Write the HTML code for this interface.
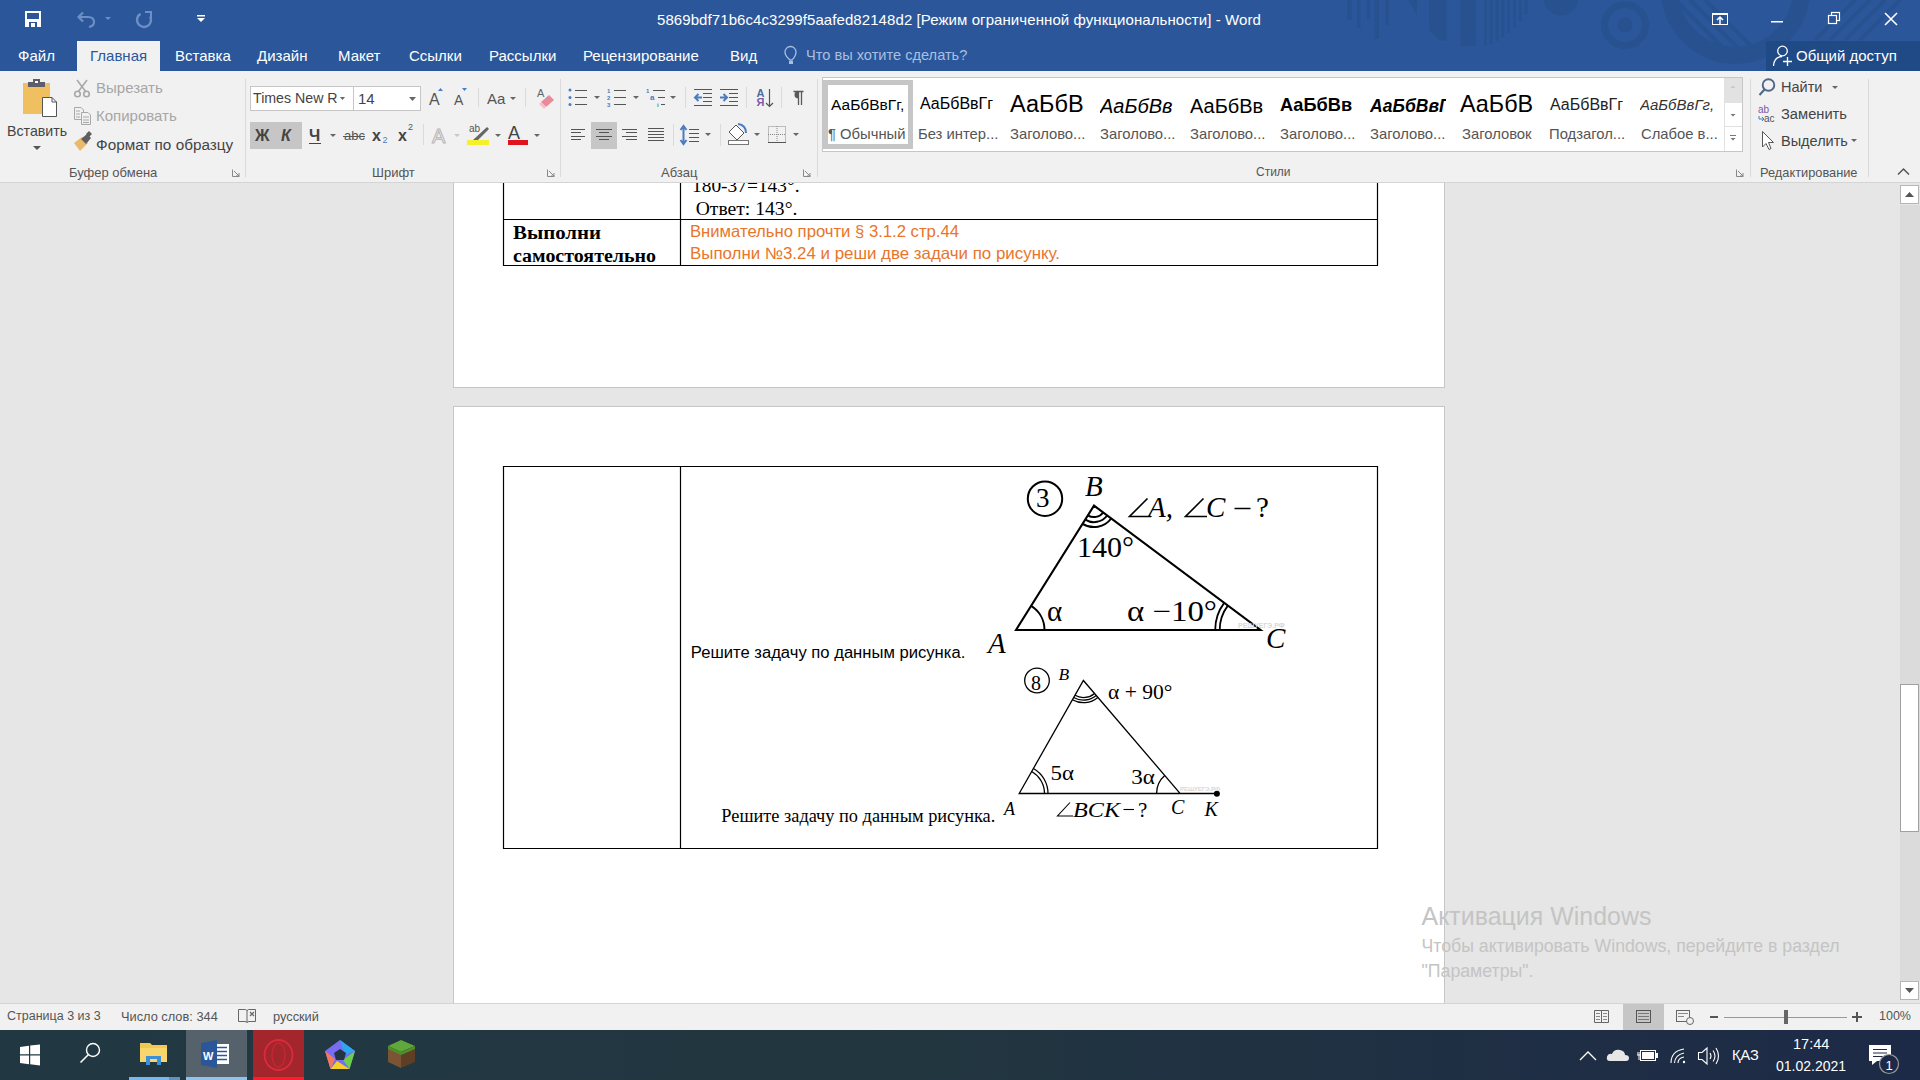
<!DOCTYPE html>
<html><head><meta charset="utf-8">
<style>
*{margin:0;padding:0;box-sizing:border-box}
html,body{width:1920px;height:1080px;overflow:hidden;background:#e6e6e6;font-family:"Liberation Sans",sans-serif}
.a{position:absolute;white-space:nowrap}
#title{position:absolute;left:0;top:0;width:1920px;height:71px;background:#2b579a;overflow:hidden}
#ribbon{position:absolute;left:0;top:71px;width:1920px;height:112px;background:#f1f1f1;border-bottom:1px solid #d4d4d4}
#doc{position:absolute;left:0;top:183px;width:1920px;height:820px;background:#e6e6e6;overflow:hidden}
#status{position:absolute;left:0;top:1003px;width:1920px;height:27px;background:#f1f1f1;border-top:1px solid #d4d4d4}
#task{position:absolute;left:0;top:1030px;width:1920px;height:50px;background:linear-gradient(to right,#213843 0%,#22363f 45%,#1d2a47 100%)}
.tab{position:absolute;top:47px;font-size:15px;color:#fff}
.page{position:absolute;left:453px;width:992px;background:#fff;border:1px solid #c6c6c6}
.tnr{font-family:"Liberation Serif",serif}
.ui{font-size:15px;color:#444}
.grp{position:absolute;top:94px;font-size:13px;color:#555}
.sep{position:absolute;top:8px;width:1px;height:98px;background:#dadada}
</style></head><body>
<div id="title">
  <svg class="a" style="left:0;top:0" width="1920" height="71" viewBox="0 0 1920 71">
    <defs><clipPath id="bc"><circle cx="1735.5" cy="-10.8" r="66"/></clipPath></defs>
    <g fill="#27518f">
      <rect x="1347" y="0" width="5" height="20"/><rect x="1357" y="0" width="3.5" height="28"/><rect x="1367" y="0" width="3" height="19"/><rect x="1374.5" y="0" width="4.5" height="39"/><rect x="1385" y="0" width="4" height="25"/>
      <path d="M1408 0 H1417 V15 Z"/>
      <path d="M1429 0 H1446.5 V41 H1440 L1429 30 Z"/>
      <rect x="1460.5" y="0" width="15.5" height="46"/>
      <rect x="1484.0" y="0" width="2.8" height="46"/><rect x="1489.8" y="0" width="2.8" height="44"/><rect x="1495.6" y="0" width="2.8" height="41"/><rect x="1501.4" y="0" width="2.8" height="37"/><rect x="1507.2" y="0" width="2.8" height="33"/><rect x="1513.0" y="0" width="2.8" height="28"/><rect x="1518.8" y="0" width="2.8" height="22"/><rect x="1524.6" y="0" width="2.8" height="15"/>
      <circle cx="1561" cy="-2" r="17.5"/>
      <circle cx="1625" cy="25" r="7.5"/>
    </g>
    <circle cx="1625" cy="25" r="20.5" fill="none" stroke="#27518f" stroke-width="7"/>
    <circle cx="1735.5" cy="-10.8" r="66" fill="none" stroke="#27518f" stroke-width="17"/>
    <g clip-path="url(#bc)" stroke="#27518f" stroke-width="4">
      <line x1="1660" y1="0" x2="1730" y2="70"/><line x1="1675" y1="0" x2="1745" y2="70"/><line x1="1690" y1="0" x2="1760" y2="70"/><line x1="1705" y1="0" x2="1775" y2="70"/>
    </g>
    <g stroke="#27518f" stroke-width="4">
      <line x1="1815" y1="40" x2="1855" y2="0"/><line x1="1830" y1="40" x2="1870" y2="0"/><line x1="1845" y1="40" x2="1885" y2="0"/><line x1="1860" y1="40" x2="1900" y2="0"/>
    </g>
    <!-- save -->
    <path d="M25 11 H41 V27 H25 Z" fill="#fff"/>
    <rect x="27" y="13" width="12" height="6" fill="#2b579a"/>
    <rect x="29" y="22" width="8" height="5" fill="#2b579a"/>
    <rect x="31" y="23" width="4" height="4" fill="#fff"/>
    <!-- undo -->
    <path d="M79 17 H88 Q94 17 94 22 Q94 26 89 27" fill="none" stroke="#6e8fc3" stroke-width="2.2"/>
    <path d="M83 12.5 L78.5 17 L83 21.5" fill="none" stroke="#6e8fc3" stroke-width="2.2"/>
    <path d="M105 17 L111 17 L108 20 Z" fill="#6e8fc3"/>
    <!-- redo -->
    <path d="M140.5 13.9 A7 7 0 1 0 150.1 16.5" fill="none" stroke="#6e8fc3" stroke-width="2.4"/>
    <path d="M145 12 H151 V18" fill="none" stroke="#6e8fc3" stroke-width="2"/>
    <!-- customize -->
    <rect x="197" y="15" width="8" height="1.5" fill="#fff"/>
    <path d="M197 18 L205 18 L201 22 Z" fill="#fff"/>
    <!-- window controls -->
    <rect x="1712.5" y="13.5" width="15" height="11" fill="none" stroke="#fff"/>
    <rect x="1712" y="13" width="16" height="2" fill="#fff"/>
    <path d="M1720 24 V17 M1717 20 L1720 17 L1723 20" fill="none" stroke="#fff" stroke-width="1.5"/>
    <rect x="1771" y="21" width="12" height="1.5" fill="#fff"/>
    <rect x="1831.5" y="12.5" width="8" height="8" fill="none" stroke="#fff" stroke-width="1.2"/>
    <rect x="1828.5" y="15.5" width="8" height="8" fill="#2b579a" stroke="#fff" stroke-width="1.2"/>
    <path d="M1885 13 L1897 25 M1897 13 L1885 25" stroke="#fff" stroke-width="1.6"/>
    <!-- share -->
    <rect x="1766" y="41" width="154" height="30" fill="#1f4a86"/>
    <circle cx="1782.5" cy="51" r="4.8" fill="none" stroke="#fff" stroke-width="1.3"/>
    <path d="M1773.5 66 Q1774 57 1782 56.5" fill="none" stroke="#fff" stroke-width="1.3"/>
    <path d="M1787.5 57 V66 M1783 61.5 H1792" stroke="#fff" stroke-width="1.3"/>
    <!-- lightbulb -->
    <path d="M790 60 Q785 56 785 52 A5.5 5.5 0 0 1 796 52 Q796 56 792 60 Z" fill="none" stroke="#a9bfe0" stroke-width="1.3"/>
    <rect x="789" y="61" width="4" height="3" fill="#a9bfe0"/>
  </svg>
  <div class="a" style="left:657px;top:11px;font-size:15px;color:#fff;letter-spacing:0.08px">5869bdf71b6c4c3299f5aafed82148d2 [Режим ограниченной функциональности] - Word</div>
  <div class="a tab" style="left:18px">Файл</div>
  <div style="position:absolute;left:77px;top:41px;width:83px;height:30px;background:#f1f1f1"></div>
  <div class="a tab" style="left:90px;color:#2b579a">Главная</div>
  <div class="a tab" style="left:175px">Вставка</div>
  <div class="a tab" style="left:257px">Дизайн</div>
  <div class="a tab" style="left:338px">Макет</div>
  <div class="a tab" style="left:409px">Ссылки</div>
  <div class="a tab" style="left:489px">Рассылки</div>
  <div class="a tab" style="left:583px">Рецензирование</div>
  <div class="a tab" style="left:730px">Вид</div>
  <div class="a tab" style="left:806px;color:#a9bfe0;font-size:14.6px">Что вы хотите сделать?</div>
  <div class="a tab" style="left:1796px">Общий доступ</div>
</div>
<div id="ribbon">
  <!-- clipboard -->
  <svg class="a" style="left:0;top:0" width="250" height="112" viewBox="0 71 250 112">
    <rect x="23" y="83" width="27" height="31" fill="#f0c060"/>
    <rect x="28" y="82" width="17" height="5" fill="#5d5d6b"/>
    <rect x="33" y="79" width="7" height="5" fill="#5d5d6b"/>
    <rect x="35" y="81" width="3" height="2" fill="#fff"/>
    <path d="M42.5 97.5 H52 L56.5 102 V116.5 H42.5 Z" fill="#fff" stroke="#555" stroke-width="1"/>
    <path d="M52 97.5 V102 H56.5" fill="none" stroke="#555" stroke-width="1"/>
    <path d="M33 146 L41 146 L37 150 Z" fill="#555"/>
    <!-- scissors -->
    <g stroke="#a8a8a8" stroke-width="1.6" fill="none">
      <line x1="77" y1="80" x2="86" y2="92"/><line x1="87" y1="80" x2="78" y2="92"/>
      <circle cx="77.5" cy="94" r="2.8"/><circle cx="86.5" cy="94" r="2.8"/>
    </g>
    <!-- copy -->
    <g stroke="#a8a8a8" stroke-width="1" fill="#f1f1f1">
      <path d="M74.5 107.5 H81 L83.5 110 V119.5 H74.5 Z"/>
      <path d="M81.5 112.5 H88 L90.5 115 V124.5 H81.5 Z"/>
      <line x1="76" y1="111" x2="80" y2="111"/><line x1="76" y1="114" x2="80" y2="114"/><line x1="76" y1="117" x2="80" y2="117"/>
      <line x1="83" y1="117" x2="89" y2="117"/><line x1="83" y1="120" x2="89" y2="120"/><line x1="83" y1="122.5" x2="89" y2="122.5"/>
    </g>
    <!-- brush -->
    <path d="M74 143 L82 137 L88 143 L80 151 Z" fill="#e9b96e"/>
    <path d="M81 139 L87 134 L91 138 L86 144 Z" fill="#5e5e5e"/>
    <path d="M86 134 L89 131 L92 134 L89 137 Z" fill="#5e5e5e"/>
    <path d="M232.5 169.5 V176.5 H239.5" fill="none" stroke="#888" stroke-width="1"/>
    <path d="M234 171 L239 176 M239 173 V176 H236" fill="none" stroke="#888" stroke-width="1"/>
  </svg>
  <div class="a ui" style="left:7px;top:52px;color:#444;font-size:14.2px">Вставить</div>
  <div class="a ui" style="left:96px;top:8px;color:#a6a6a6">Вырезать</div>
  <div class="a ui" style="left:96px;top:36px;color:#a6a6a6">Копировать</div>
  <div class="a ui" style="left:96px;top:65px;color:#444;font-size:15.3px">Формат по образцу</div>
  <div class="a grp" style="left:69px">Буфер обмена</div>
  <div class="sep" style="left:245px"></div>
  <!-- font group -->
  <div class="a" style="left:250px;top:15px;width:104px;height:25px;background:#fff;border:1px solid #c6c6c6"></div>
  <div class="a" style="left:353px;top:15px;width:68px;height:25px;background:#fff;border:1px solid #c6c6c6"></div>
  <div class="a ui" style="left:253px;top:19px;color:#444;font-size:14.2px;width:86px;overflow:hidden">Times New R</div>
  <div class="a ui" style="left:358px;top:19px;color:#444">14</div>
  <div class="a" style="left:250px;top:51px;width:52px;height:27px;background:#c6c6c6"></div>
  <svg class="a" style="left:245px;top:0" width="320" height="112" viewBox="245 71 320 112">
    <g fill="#666">
      <path d="M340 97 L345 97 L342.5 100 Z"/><path d="M409 97 L416 97 L412.5 101 Z"/>
      <path d="M510 97 L516 97 L513 100 Z"/>
    </g>
    <text x="429" y="105" font-family="Liberation Sans" font-size="16" fill="#555">A</text>
    <path d="M438 91 L443 91 L440.5 88 Z" fill="#4a7cc0"/>
    <text x="454" y="105" font-family="Liberation Sans" font-size="14" fill="#555">A</text>
    <path d="M462 88 L467 88 L464.5 91 Z" fill="#4a7cc0"/>
    <line x1="478.5" y1="88" x2="478.5" y2="107" stroke="#dadada"/>
    <text x="487" y="104" font-family="Liberation Sans" font-size="15" fill="#555">Aa</text>
    <line x1="525.5" y1="88" x2="525.5" y2="107" stroke="#dadada"/>
    <text x="537" y="97" font-family="Liberation Sans" font-size="11" fill="#666">A</text>
    <path d="M541 102 L549 95 L554 100 L546 107 Z" fill="#e98a9a"/>
    <path d="M541 102 L546 107 L544 109 L539 104 Z" fill="#f5c0c8"/>
    <!-- row 2 -->
    <text x="255" y="141" font-family="Liberation Sans" font-size="16" font-weight="700" fill="#444">Ж</text>
    <text x="281" y="141" font-family="Liberation Sans" font-size="16" font-weight="700" font-style="italic" fill="#444">К</text>
    <text x="309" y="141" font-family="Liberation Sans" font-size="16" font-weight="700" fill="#444">Ч</text>
    <line x1="309" y1="143.5" x2="321" y2="143.5" stroke="#444"/>
    <path d="M330 134 L336 134 L333 137 Z" fill="#666"/>
    <text x="344" y="140" font-family="Liberation Sans" font-size="13" fill="#555">abc</text>
    <line x1="343" y1="136.5" x2="365" y2="136.5" stroke="#555"/>
    <text x="372" y="141" font-family="Liberation Sans" font-size="16" font-weight="700" fill="#444">x</text>
    <text x="382.5" y="143" font-family="Liberation Sans" font-size="9" fill="#4a7cc0">2</text>
    <text x="398" y="141" font-family="Liberation Sans" font-size="16" font-weight="700" fill="#444">x</text>
    <text x="408" y="130" font-family="Liberation Sans" font-size="9" fill="#555">2</text>
    <line x1="423.5" y1="124" x2="423.5" y2="145" stroke="#dadada"/>
    <text x="432" y="143" font-family="Liberation Sans" font-size="20" fill="#f1f1f1" stroke="#b8b8b8" stroke-width="1">A</text>
    <path d="M454 134 L460 134 L457 137 Z" fill="#c8c8c8"/>
    <text x="469" y="132" font-family="Liberation Sans" font-size="10" fill="#555">ab</text>
    <path d="M473 140 L487 127 L489 129 L476 142 Z" fill="#666"/>
    <rect x="467" y="140" width="22" height="5" fill="#f5f02a"/>
    <path d="M495 134 L501 134 L498 137 Z" fill="#666"/>
    <text x="508" y="139" font-family="Liberation Sans" font-size="18" fill="#444">A</text>
    <rect x="508" y="140" width="20" height="5" fill="#e0141e"/>
    <path d="M534 134 L540 134 L537 137 Z" fill="#666"/>
    <path d="M547.5 169.5 V176.5 H554.5" fill="none" stroke="#888"/>
    <path d="M549 171 L554 176 M554 173 V176 H551" fill="none" stroke="#888"/>
  </svg>
  <div class="a grp" style="left:372px">Шрифт</div>
  <div class="sep" style="left:560px"></div>
  <!-- paragraph group -->
  <div class="a" style="left:591px;top:51px;width:26px;height:27px;background:#c6c6c6"></div>
  <svg class="a" style="left:560px;top:0" width="260" height="112" viewBox="560 71 260 112">
    <g fill="#4a7cc0">
      <circle cx="570" cy="90" r="1.5"/><circle cx="570" cy="97.5" r="1.5"/><circle cx="570" cy="104.5" r="1.5"/>
    </g>
    <g stroke="#555" stroke-width="1">
      <line x1="575" y1="90.5" x2="587" y2="90.5"/><line x1="575" y1="97.5" x2="587" y2="97.5"/><line x1="575" y1="104.5" x2="587" y2="104.5"/>
      <line x1="614" y1="90.5" x2="626" y2="90.5"/><line x1="614" y1="97.5" x2="626" y2="97.5"/><line x1="614" y1="104.5" x2="626" y2="104.5"/>
      <line x1="653" y1="90.5" x2="665" y2="90.5"/><line x1="658" y1="97.5" x2="665" y2="97.5"/><line x1="661" y1="104.5" x2="665" y2="104.5"/>
    </g>
    <g font-family="Liberation Sans" font-size="6" fill="#4a7cc0" font-weight="700">
      <text x="607" y="93">1</text><text x="607" y="100">2</text><text x="607" y="107">3</text>
      <text x="646" y="93">1</text><text x="650" y="100" font-size="8">a</text><text x="657" y="107">i</text>
    </g>
    <g fill="#666">
      <path d="M594 96 L600 96 L597 99 Z"/><path d="M633 96 L639 96 L636 99 Z"/><path d="M670 96 L676 96 L673 99 Z"/>
      <path d="M705 133 L711 133 L708 136 Z"/><path d="M754 133 L760 133 L757 136 Z"/><path d="M793 133 L799 133 L796 136 Z"/>
    </g>
    <g stroke="#dadada">
      <line x1="685.5" y1="87" x2="685.5" y2="108"/><line x1="746.5" y1="87" x2="746.5" y2="108"/><line x1="781.5" y1="87" x2="781.5" y2="108"/>
      <line x1="673.5" y1="124" x2="673.5" y2="146"/><line x1="720.5" y1="124" x2="720.5" y2="146"/>
    </g>
    <g stroke="#555" stroke-width="1">
      <line x1="694" y1="89.5" x2="712" y2="89.5"/><line x1="703" y1="93.5" x2="712" y2="93.5"/><line x1="703" y1="97.5" x2="712" y2="97.5"/><line x1="703" y1="101.5" x2="712" y2="101.5"/><line x1="694" y1="105.5" x2="712" y2="105.5"/>
      <line x1="720" y1="89.5" x2="738" y2="89.5"/><line x1="729" y1="93.5" x2="738" y2="93.5"/><line x1="729" y1="97.5" x2="738" y2="97.5"/><line x1="729" y1="101.5" x2="738" y2="101.5"/><line x1="720" y1="105.5" x2="738" y2="105.5"/>
    </g>
    <g stroke="#4a7cc0" stroke-width="2" fill="none">
      <path d="M702 97.5 H695 M698.5 94 L695 97.5 L698.5 101"/>
      <path d="M720 97.5 H727 M723.5 94 L727 97.5 L723.5 101"/>
    </g>
    <text x="756.5" y="96.8" font-family="Liberation Sans" font-size="11" font-weight="700" fill="#4a6fa0">A</text>
    <text x="756.5" y="106.3" font-family="Liberation Sans" font-size="11" font-weight="700" fill="#7a5aa8">Я</text>
    <path d="M769.5 89 V106.5 M766 103 L769.5 106.5 L773 103" fill="none" stroke="#555" stroke-width="1.2"/>
    <path d="M793.5 91.5 H803.5 M798.5 91.5 V105 M801.5 91.5 V105" fill="none" stroke="#5a5a5a" stroke-width="1.3"/><path d="M798.5 91 A4 3.8 0 0 0 798.5 98.6 Z" fill="#5a5a5a"/>
    <!-- row2 -->
    <g stroke="#555" stroke-width="1">
      <line x1="571" y1="129.5" x2="585" y2="129.5"/><line x1="571" y1="132.5" x2="581" y2="132.5"/><line x1="571" y1="136.5" x2="585" y2="136.5"/><line x1="571" y1="139.5" x2="581" y2="139.5"/>
      <line x1="596" y1="129.5" x2="612" y2="129.5"/><line x1="599" y1="132.5" x2="609" y2="132.5"/><line x1="596" y1="136.5" x2="612" y2="136.5"/><line x1="599" y1="139.5" x2="609" y2="139.5"/>
      <line x1="622" y1="129.5" x2="637" y2="129.5"/><line x1="626" y1="132.5" x2="637" y2="132.5"/><line x1="622" y1="136.5" x2="637" y2="136.5"/><line x1="626" y1="139.5" x2="637" y2="139.5"/>
      <line x1="648" y1="128.5" x2="664" y2="128.5"/><line x1="648" y1="131.5" x2="664" y2="131.5"/><line x1="648" y1="134.5" x2="664" y2="134.5"/><line x1="648" y1="137.5" x2="664" y2="137.5"/><line x1="648" y1="140.5" x2="664" y2="140.5"/>
      <line x1="689" y1="129.5" x2="699" y2="129.5"/><line x1="689" y1="133.5" x2="699" y2="133.5"/><line x1="689" y1="137.5" x2="699" y2="137.5"/><line x1="689" y1="141.5" x2="699" y2="141.5"/>
    </g>
    <path d="M683.5 127 V143 M680.5 130 L683.5 126 L686.5 130 M680.5 140 L683.5 144 L686.5 140" fill="none" stroke="#4a7cc0" stroke-width="2"/>
    <path d="M729 132 L736 125 L744 133 L737 140 Z" fill="#fff" stroke="#555"/>
    <path d="M738 124 Q746 125 746 133" fill="none" stroke="#4a7cc0" stroke-width="2"/>
    <rect x="728.5" y="140.5" width="20" height="4" fill="#fff" stroke="#777"/>
    <g stroke="#888" stroke-width="1" stroke-dasharray="1,1" fill="none">
      <rect x="768.5" y="126.5" width="17" height="16"/><line x1="777" y1="126" x2="777" y2="143"/><line x1="768" y1="134.5" x2="786" y2="134.5"/>
    </g>
    <line x1="768" y1="142.5" x2="786" y2="142.5" stroke="#555"/>
    <path d="M803.5 169.5 V176.5 H810.5" fill="none" stroke="#888"/>
    <path d="M805 171 L810 176 M810 173 V176 H807" fill="none" stroke="#888"/>
  </svg>
  <div class="a grp" style="left:661px">Абзац</div>
  <div class="sep" style="left:817px"></div>
  <!-- styles -->
  <div class="a" style="left:822px;top:6px;width:921px;height:75px;background:#fff;border:1px solid #c6c6c6"></div>
  <div class="a" style="left:823px;top:9px;width:90px;height:69px;border:5px solid #c6c6c6"></div>
  <div class="a" style="left:1724px;top:7px;width:18px;height:73px;border-left:1px solid #e1e1e1"></div>
  <div class="a" style="left:1725px;top:7px;width:17px;height:25px;background:#e2e2e2"></div>
  <div class="a" style="left:1725px;top:55px;width:17px;height:1px;background:#e1e1e1"></div>
  <svg class="a" style="left:1724px;top:0" width="20" height="112" viewBox="1724 71 20 112">
    <path d="M1730.5 88 L1735.5 88 L1733 85.5 Z" fill="#c8c8c8"/>
    <path d="M1730.5 114 L1735.5 114 L1733 116.5 Z" fill="#777"/>
    <path d="M1730 135.5 H1736" stroke="#777"/>
    <path d="M1730.5 138 L1735.5 138 L1733 140.5 Z" fill="#777"/>
    <path d="M1736.5 169.5 V176.5 H1743.5" fill="none" stroke="#888"/>
    <path d="M1738 171 L1743 176 M1743 173 V176 H1740" fill="none" stroke="#888"/>
  </svg>
  <div class="a" style="left:831px;top:25px;width:76px;overflow:hidden;font-size:15.5px;color:#000">АаБбВвГг,</div>
  <div class="a" style="left:920px;top:24px;font-size:16px;color:#000">АаБбВвГг</div>
  <div class="a" style="left:1010px;top:20px;font-size:23.5px;color:#000">АаБбВ</div>
  <div class="a" style="left:1100px;top:24px;font-size:20px;font-style:italic;color:#000;width:76px;overflow:hidden">АаБбВв</div>
  <div class="a" style="left:1190px;top:24px;font-size:20px;color:#000">АаБбВв</div>
  <div class="a" style="left:1280px;top:24px;font-size:18.2px;font-weight:700;color:#000">АаБбВв</div>
  <div class="a" style="left:1370px;top:25px;font-size:17.5px;font-weight:700;font-style:italic;color:#000;width:76px;overflow:hidden">АаБбВвГ</div>
  <div class="a" style="left:1460px;top:20px;font-size:23.4px;color:#000">АаБбВ</div>
  <div class="a" style="left:1550px;top:25px;font-size:16px;color:#222;width:76px;overflow:hidden">АаБбВвГг</div>
  <div class="a" style="left:1640px;top:25px;font-size:15px;font-style:italic;color:#333;width:76px;overflow:hidden">АаБбВвГг,</div>
  <div class="a" style="left:828px;top:55px;font-size:14.8px;color:#555">¶ Обычный</div>
  <div class="a" style="left:918px;top:55px;font-size:14.8px;color:#555">Без интер...</div>
  <div class="a" style="left:1010px;top:55px;font-size:14.8px;color:#555">Заголово...</div>
  <div class="a" style="left:1100px;top:55px;font-size:14.8px;color:#555">Заголово...</div>
  <div class="a" style="left:1190px;top:55px;font-size:14.8px;color:#555">Заголово...</div>
  <div class="a" style="left:1280px;top:55px;font-size:14.8px;color:#555">Заголово...</div>
  <div class="a" style="left:1370px;top:55px;font-size:14.8px;color:#555">Заголово...</div>
  <div class="a" style="left:1462px;top:55px;font-size:14.8px;color:#555">Заголовок</div>
  <div class="a" style="left:1549px;top:55px;font-size:14.8px;color:#555">Подзагол...</div>
  <div class="a" style="left:1641px;top:55px;font-size:14.8px;color:#555">Слабое в...</div>
  <div class="a grp" style="left:1256px;font-size:12px">Стили</div>
  <div class="sep" style="left:1750px"></div>
  <!-- editing -->
  <svg class="a" style="left:1750px;top:0" width="170" height="112" viewBox="1750 71 170 112">
    <circle cx="1768.5" cy="85" r="5.8" fill="none" stroke="#4f6686" stroke-width="1.9"/>
    <line x1="1764.5" y1="89.5" x2="1759.5" y2="95" stroke="#4f6686" stroke-width="2"/>
    <path d="M1832 86 L1838 86 L1835 89 Z" fill="#666"/>
    <text x="1758" y="113" font-family="Liberation Sans" font-size="10" fill="#7a5aa8">ab</text>
    <text x="1764" y="122" font-family="Liberation Sans" font-size="10" fill="#555">ac</text>
    <path d="M1759 116 V119 H1764 M1762 117 L1764 119 L1762 121" fill="none" stroke="#4a7cc0" stroke-width="1"/>
    <path d="M1762.5 131.5 L1762.5 147 L1766 143.5 L1769 149.5 L1771 148.5 L1768.5 142.5 L1773.5 142.5 Z" fill="#fff" stroke="#555" stroke-width="1"/>
    <path d="M1851 139 L1857 139 L1854 142 Z" fill="#666"/>
    <path d="M1898 174.5 L1903.5 169 L1909 174.5" fill="none" stroke="#555" stroke-width="1.5"/>
  </svg>
  <div class="a ui" style="left:1781px;top:8px;font-size:14.5px">Найти</div>
  <div class="a ui" style="left:1781px;top:35px;font-size:14.7px">Заменить</div>
  <div class="a ui" style="left:1781px;top:62px;font-size:14.5px">Выделить</div>
  <div class="a grp" style="left:1760px;font-size:12.8px">Редактирование</div>
  <div class="sep" style="left:1868px"></div>
</div>
<div id="doc">
<svg style="position:absolute;left:0;top:-183px" width="1920" height="1003" viewBox="0 0 1920 1003">
  <rect x="453.5" y="150.5" width="991" height="237" fill="#fff" stroke="#c6c6c6"/>
  <rect x="453.5" y="406.5" width="991" height="700" fill="#fff" stroke="#c6c6c6"/>
  <g stroke="#000" stroke-width="1.2" fill="none">
    <path d="M503.5 150 V265.5 M680.5 150 V265.5 M1377.5 150 V265.5 M503 219.5 H1378 M503 265.5 H1378"/>
    <path d="M503 466.5 H1378 M503 848.5 H1378 M503.5 466 V849 M680.5 466 V849 M1377.5 466 V849"/>
  </g>
  <g font-family="Liberation Serif" font-size="18.67" fill="#000">
    <text x="692" y="191.7" textLength="107.6" lengthAdjust="spacingAndGlyphs">180-37=143°.</text>
    <text x="695.7" y="214.6" textLength="101.7" lengthAdjust="spacingAndGlyphs">Ответ: 143°.</text>
    <text x="513" y="238.7" font-weight="700" textLength="88" lengthAdjust="spacingAndGlyphs">Выполни</text>
    <text x="513" y="261.7" font-weight="700" textLength="143" lengthAdjust="spacingAndGlyphs">самостоятельно</text>
    <text x="721.3" y="821.7" font-size="18.3" textLength="274" lengthAdjust="spacingAndGlyphs">Решите задачу по данным рисунка.</text>
  </g>
  <g font-family="Liberation Sans" fill="#e8752a" font-size="16.5">
    <text x="690" y="236.7" textLength="269" lengthAdjust="spacingAndGlyphs">Внимательно прочти § 3.1.2 стр.44</text>
    <text x="690" y="259" textLength="370" lengthAdjust="spacingAndGlyphs">Выполни №3.24 и реши две задачи по рисунку.</text>
  </g>
  <g stroke="#000" fill="none">
    <path d="M1016 630 L1094 505.6 L1260.5 630 Z" stroke-width="2.1" stroke-linejoin="miter"/>
    <path d="M1087.9 515.3 A11.5 11.5 0 0 0 1103.2 512.5" stroke-width="2"/>
    <path d="M1085.2 519.6 A16.5 16.5 0 0 0 1107.2 515.5" stroke-width="2"/>
    <path d="M1082.6 523.8 A21.5 21.5 0 0 0 1111.2 518.5" stroke-width="2"/>
    <path d="M1044.5 630.0 A28.5 28.5 0 0 0 1031.1 605.9" stroke-width="2"/>
    <path d="M1227.8 605.6 A40.8 40.8 0 0 0 1219.7 630.0" stroke-width="1.8"/>
    <path d="M1224.2 602.9 A45.3 45.3 0 0 0 1215.2 630.0" stroke-width="1.8"/>
    <circle cx="1045" cy="498.7" r="17.2" stroke-width="2"/>
  </g>
  <g font-family="Liberation Serif" fill="#000">
    <text x="1036" y="506.6" font-size="27">3</text>
    <text x="1085" y="495.5" font-size="29" font-style="italic">B</text>
    <text x="1077" y="556.5" font-size="30" textLength="57" lengthAdjust="spacingAndGlyphs">140°</text>
    <path d="M1147.5 498.5 L1129.5 516.5 H1151 M1203.5 498.5 L1185.5 516.5 H1207" fill="none" stroke="#000" stroke-width="1.6"/>
    <text x="1148" y="517.4" font-size="29" font-style="italic">A,</text>
    <text x="1206" y="517.4" font-size="29" font-style="italic">C</text>
    <path d="M1234.5 508.5 H1250.5" stroke="#000" stroke-width="1.5"/>
    <text x="1256" y="517.4" font-size="29">?</text>
    <text x="1047" y="621" font-size="29">α</text>
    <text x="1127" y="621" font-size="29" textLength="90" lengthAdjust="spacingAndGlyphs">α −10°</text>
    <text x="988" y="652.6" font-size="29" font-style="italic">A</text>
    <text x="1266" y="648" font-size="29" font-style="italic">C</text>
  </g>
  <text x="1238" y="628" font-family="Liberation Sans" font-size="7" fill="#d8d8d8" font-weight="700">РЕШУЕГЭ.РФ</text>
  <g stroke="#000" fill="none" stroke-width="1.3">
    <path d="M1019.2 793.5 L1083.4 680.5 L1180.2 793.5 Z M1180.2 793.5 H1216.9"/>
    <path d="M1075.0 695.3 A17 17 0 0 0 1094.5 693.4"/>
    <path d="M1073.7 697.5 A19.6 19.6 0 0 0 1096.2 695.4"/>
    <path d="M1072.4 699.8 A22.2 22.2 0 0 0 1097.8 697.4"/>
    <path d="M1044.5 793.5 A25.3 25.3 0 0 0 1031.7 771.5"/>
    <path d="M1048.0 793.5 A28.8 28.8 0 0 0 1033.4 768.5"/>
    <path d="M1164.8 775.6 A23.6 23.6 0 0 0 1156.6 793.5"/>
    <circle cx="1037" cy="680.5" r="12.3"/>
  </g>
  <circle cx="1216.9" cy="793.7" r="3" fill="#000"/>
  <g font-family="Liberation Serif" fill="#000">
    <text x="1031" y="689.5" font-size="20">8</text>
    <text x="1058.5" y="680.1" font-size="17.5" font-style="italic">B</text>
    <text x="1108" y="698.6" font-size="20.5" textLength="64.5" lengthAdjust="spacingAndGlyphs">α + 90°</text>
    <text x="1050.5" y="780.4" font-size="21" textLength="23.5" lengthAdjust="spacingAndGlyphs">5α</text>
    <text x="1131.3" y="784.3" font-size="21" textLength="23.7" lengthAdjust="spacingAndGlyphs">3α</text>
    <text x="1004" y="815" font-size="18" font-style="italic">A</text>
    <path d="M1070 802.5 L1057.5 816 H1073" fill="none" stroke="#000" stroke-width="1.1"/>
    <text x="1073" y="816.6" font-size="21" font-style="italic" textLength="47" lengthAdjust="spacingAndGlyphs">BCK</text>
    <path d="M1123.5 809.5 H1134" stroke="#000" stroke-width="1.1"/>
    <text x="1138" y="816.6" font-size="21">?</text>
    <text x="1171" y="814.2" font-size="20" font-style="italic">C</text>
    <text x="1204.5" y="815.8" font-size="20" font-style="italic">K</text>
  </g>
  <text x="1180" y="791" font-family="Liberation Sans" font-size="6" fill="#d8d8d8" font-weight="700">РЕШУЕГЭ.РФ</text>
  <text x="690.8" y="657.5" font-family="Liberation Sans" font-size="15.8" fill="#000" textLength="274.5" lengthAdjust="spacingAndGlyphs">Решите задачу по данным рисунка.</text>
</svg>
</div>
<div id="status">
  <div class="a" style="left:7px;top:5px;font-size:12.5px;color:#555">Страница 3 из 3</div>
  <div class="a" style="left:121px;top:5px;font-size:12.8px;color:#555">Число слов: 344</div>
  <svg class="a" style="left:236px;top:0" width="22" height="26" viewBox="236 1003 22 26">
    <path d="M238.5 1008.5 H245.5 Q247 1009 247 1010 V1021.5 Q246 1020.5 245 1020.5 H238.5 Z" fill="none" stroke="#666"/>
    <path d="M247 1010 Q247 1009 248.5 1008.5 H255.5 V1020.5 H249 Q248 1020.5 247 1021.5" fill="none" stroke="#666"/>
    <path d="M250 1011 L254 1015 M254 1011 L250 1015" stroke="#666" stroke-width="1.2"/>
  </svg>
  <div class="a" style="left:273px;top:5px;font-size:12.8px;color:#555">русский</div>
  <svg class="a" style="left:1590px;top:0" width="330" height="26" viewBox="1590 1003 330 26">
    <rect x="1623" y="1003" width="41" height="26" fill="#c6c6c6"/>
    <path d="M1594.5 1009.5 H1601.5 V1021.5 H1594.5 Z M1601.5 1009.5 H1608.5 V1021.5 H1601.5 Z" fill="none" stroke="#666"/>
    <path d="M1596 1012.5 H1600 M1596 1015.5 H1600 M1596 1018.5 H1600 M1603 1012.5 H1607 M1603 1015.5 H1607 M1603 1018.5 H1607" stroke="#888"/>
    <rect x="1636.5" y="1009.5" width="14" height="12" fill="none" stroke="#555"/>
    <path d="M1638 1012.5 H1649 M1638 1015.5 H1649 M1638 1018.5 H1649" stroke="#777"/>
    <rect x="1676.5" y="1009.5" width="13" height="11" fill="none" stroke="#666"/>
    <path d="M1678 1012.5 H1688 M1678 1015.5 H1684" stroke="#888"/>
    <circle cx="1690" cy="1020" r="3.5" fill="#f1f1f1" stroke="#666"/>
    <rect x="1710" y="1015" width="8" height="2" fill="#555"/>
    <rect x="1724" y="1016" width="123" height="1" fill="#999"/>
    <rect x="1784" y="1009" width="4" height="14" fill="#666"/>
    <rect x="1852" y="1015" width="10" height="2" fill="#555"/>
    <rect x="1856" y="1011" width="2" height="10" fill="#555"/>
  </svg>
  <div class="a" style="left:1879px;top:5px;font-size:12.5px;color:#555">100%</div>
</div>
<div id="task">
  <svg class="a" style="left:0;top:0" width="1920" height="50" viewBox="0 1030 1920 50">
    <!-- windows logo -->
    <path d="M20 1047 L29 1045.7 V1054.3 H20 Z M30.2 1045.5 L40 1044.5 V1054.3 H30.2 Z M20 1055.5 H29 V1064.2 L20 1063 Z M30.2 1055.5 H40 V1065.5 L30.2 1064.3 Z" fill="#fff"/>
    <!-- search -->
    <circle cx="93" cy="1050" r="6.5" fill="none" stroke="#fff" stroke-width="1.4"/>
    <path d="M88.5 1054.5 L80.5 1062.5" stroke="#fff" stroke-width="1.6"/>
    <!-- explorer -->
    <path d="M140 1043 H150 L152 1045 H167 V1062 H140 Z" fill="#f2c94c"/>
    <rect x="140" y="1048" width="27" height="14" fill="#f8d66b"/>
    <path d="M146 1065 V1056 H161 V1065 H157 V1059 H150 V1065 Z" fill="#3d8fd6"/>
    <rect x="129" y="1077" width="51" height="3" fill="#76b9ed"/>
    <rect x="169" y="1077" width="11" height="3" fill="#5f93bc"/>
    <!-- word -->
    <rect x="186" y="1030" width="61" height="50" fill="#56626b"/>
    <rect x="186" y="1077" width="61" height="3" fill="#8ec3ee"/>
    <path d="M213 1044 H229 V1064 H213 Z" fill="#fff"/>
    <path d="M215 1047.5 H227 M215 1051.5 H227 M215 1055.5 H227 M215 1059.5 H227" stroke="#2b579a" stroke-width="1.5"/>
    <path d="M201 1043 L217 1040 V1068 L201 1065 Z" fill="#2b579a"/>
    <text x="203" y="1060" font-family="Liberation Sans" font-size="11" font-weight="700" fill="#fff">W</text>
    <!-- opera -->
    <rect x="253" y="1030" width="51" height="50" fill="#a3262d"/>
    <rect x="253" y="1077" width="51" height="3" fill="#ff1b2d"/>
    <ellipse cx="278.5" cy="1055" rx="14" ry="15" fill="none" stroke="#dc2a3c" stroke-width="1.8"/>
    <ellipse cx="278.5" cy="1055" rx="6.5" ry="12" fill="none" stroke="#c42636" stroke-width="1.4"/>
    <!-- pentagon app -->
    <path d="M340 1040 L355 1051 L349.5 1069 L330.5 1069 L325 1051 Z" fill="#7a6cf0"/>
    <path d="M340 1040 L355 1051 L345 1055 Z" fill="#2aa7f0"/>
    <path d="M355 1051 L349.5 1069 L343 1060 Z" fill="#6ad04a"/>
    <path d="M349.5 1069 L330.5 1069 L337 1061 Z" fill="#f5d02a"/>
    <path d="M330.5 1069 L325 1051 L335 1059 Z" fill="#f07a5a"/>
    <path d="M340 1049 L346 1053 L344 1060 L336 1060 L334 1053 Z" fill="#213642"/>
    <!-- minecraft -->
    <path d="M388 1046 L401 1040 L415 1046 L401 1052 Z" fill="#5fa83a"/>
    <path d="M388 1046 L401 1052 V1068 L388 1062 Z" fill="#7a5434"/>
    <path d="M401 1052 L415 1046 V1062 L401 1068 Z" fill="#5e3f26"/>
    <path d="M388 1046 L401 1052 L415 1046 V1049 L401 1055 L388 1049 Z" fill="#4d8f2e"/>
    <!-- tray -->
    <path d="M1580 1060 L1588 1052 L1596 1060" fill="none" stroke="#fff" stroke-width="1.3"/>
    <path d="M1610 1061 Q1606 1061 1607 1056.5 Q1608 1053 1612 1054 Q1614 1049 1620 1050 Q1625 1051 1625 1055 Q1629 1055 1629 1058 Q1629 1061 1626 1061 Z" fill="#e6e6e6"/>
    <path d="M1638 1052 V1055 M1640 1052 V1055 M1637 1055 H1641 M1639 1055 V1060" stroke="#fff" stroke-width="1"/>
    <rect x="1640.5" y="1050.5" width="15" height="10" fill="none" stroke="#fff"/>
    <rect x="1642" y="1052" width="12" height="7" fill="#fff"/>
    <rect x="1656" y="1053" width="2" height="5" fill="#fff"/>
    <path d="M1671 1063 Q1671 1051 1684 1049 M1674.5 1063 Q1675 1055 1684 1053 M1678 1063 Q1678 1058 1684 1057" fill="none" stroke="#fff" stroke-width="1.1"/>
    <circle cx="1684" cy="1062" r="1.2" fill="#fff"/>
    <path d="M1698.5 1052.5 H1702 L1707 1048 V1064 L1702 1059.5 H1698.5 Z" fill="none" stroke="#fff" stroke-width="1.1"/>
    <path d="M1710 1053 Q1712 1056 1710 1059 M1713 1050.5 Q1717 1056 1713 1061.5 M1716 1048 Q1721 1056 1716 1064" fill="none" stroke="#fff" stroke-width="1.1"/>
    <!-- notification -->
    <path d="M1869 1045 H1891 V1061 H1877 L1872 1065 V1061 H1869 Z" fill="#fff"/>
    <path d="M1873 1049.5 H1887 M1873 1053 H1887 M1873 1056.5 H1887" stroke="#1d2a47" stroke-width="1.2"/>
    <circle cx="1889" cy="1064" r="9.5" fill="#1d2a47" stroke="#999" stroke-width="1.2"/>
    <text x="1885.5" y="1069.5" font-family="Liberation Sans" font-size="13" fill="#fff">1</text>
  </svg>
  <div class="a" style="left:1732px;top:16.5px;font-size:14.5px;color:#fff">ҚАЗ</div>
  <div class="a" style="left:1793px;top:5.5px;font-size:14.5px;color:#fff">17:44</div>
  <div class="a" style="left:1776px;top:28px;font-size:14px;color:#fff">01.02.2021</div>
</div>
<!-- scrollbar -->
<div class="a" style="left:1900px;top:205px;width:20px;height:776px;background:#dbdbdb"></div>
<div class="a" style="left:1900px;top:185px;width:19px;height:19px;background:#fff;border:1px solid #b5b5b5"></div>
<div class="a" style="left:1900px;top:981px;width:19px;height:19px;background:#fff;border:1px solid #b5b5b5"></div>
<div class="a" style="left:1900px;top:684px;width:19px;height:148px;background:#fff;border:1px solid #a0a0a0"></div>
<svg class="a" style="left:1900px;top:183px" width="20" height="820" viewBox="1900 183 20 820">
  <path d="M1905 197 L1914 197 L1909.5 192 Z" fill="#555"/>
  <path d="M1905 988 L1914 988 L1909.5 993 Z" fill="#555"/>
</svg>
<!-- activation watermark -->
<svg class="a" style="left:1400px;top:890px" width="460" height="100" viewBox="1400 890 460 100">
  <g font-family="Liberation Sans" fill="#c4c4c4">
    <text x="1421.5" y="925" font-size="25" textLength="230" lengthAdjust="spacingAndGlyphs">Активация Windows</text>
    <text x="1421.5" y="951.7" font-size="17.6" textLength="418" lengthAdjust="spacingAndGlyphs">Чтобы активировать Windows, перейдите в раздел</text>
    <text x="1421.5" y="977" font-size="17.6" textLength="112" lengthAdjust="spacingAndGlyphs">"Параметры".</text>
  </g>
</svg>
</body></html>
